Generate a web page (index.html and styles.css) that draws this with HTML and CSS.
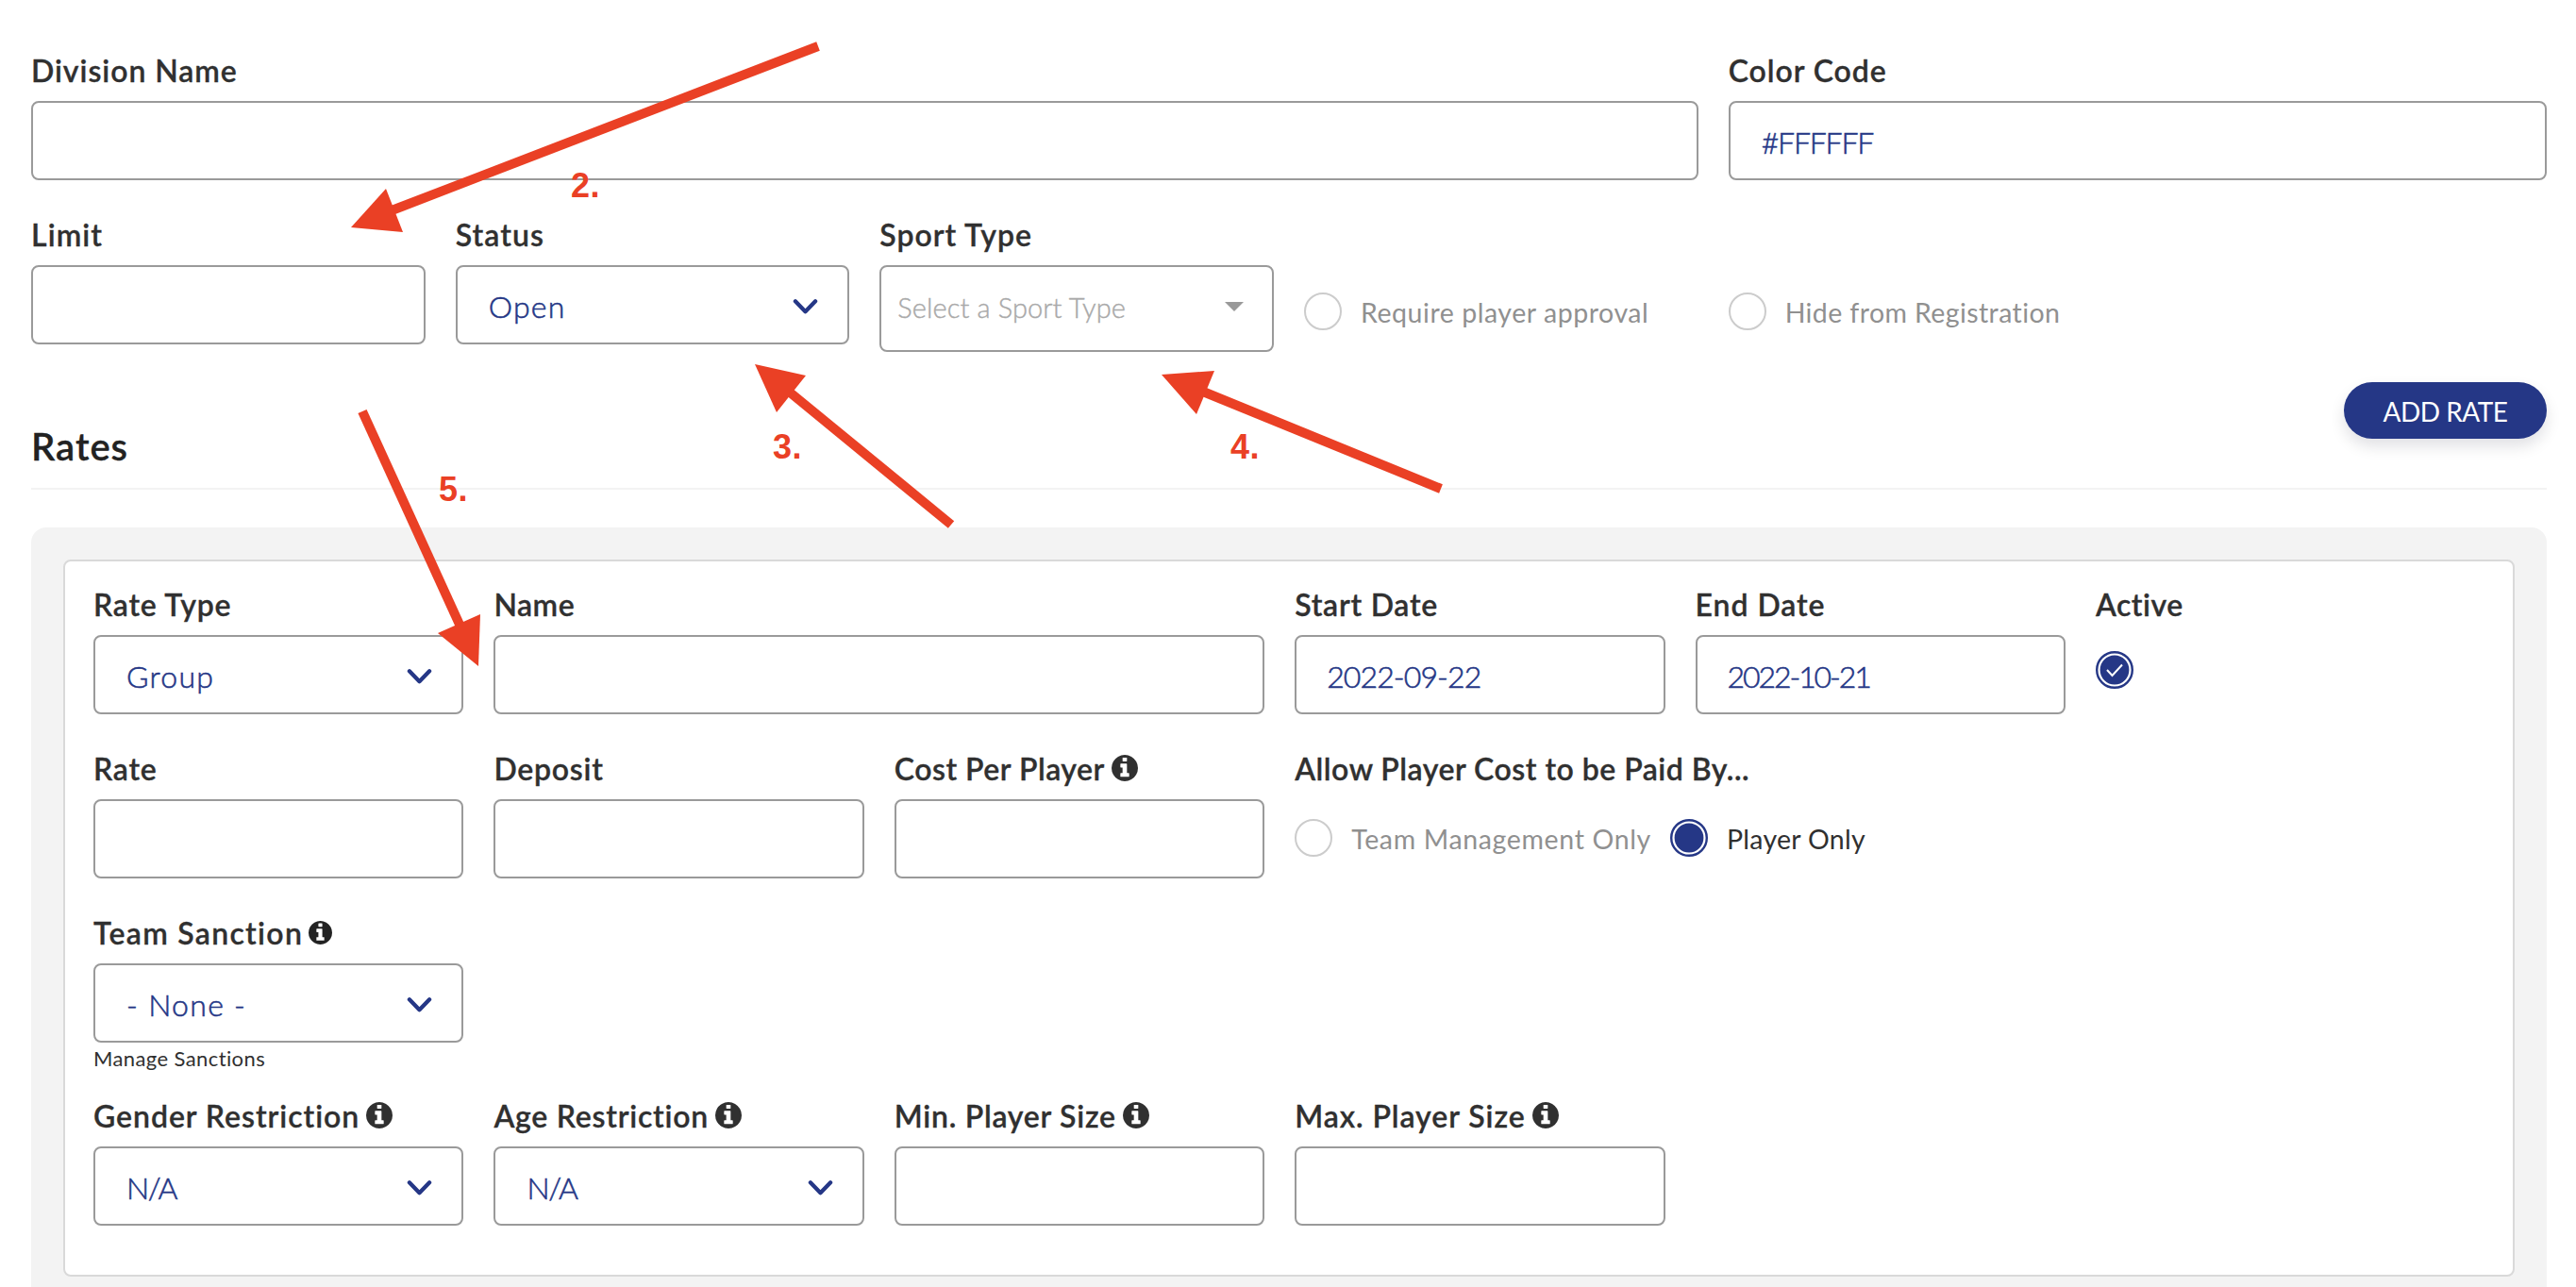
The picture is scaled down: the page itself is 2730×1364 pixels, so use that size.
FILE: index.html
```html
<!DOCTYPE html>
<html lang="en">
<head>
<meta charset="utf-8">
<title>Division</title>
<link rel="stylesheet" href="styles.css">
</head>
<body>
<svg class="sprite" aria-hidden="true">
  <symbol id="chevron" viewBox="0 0 28 18"><path d="M3 3 L14 14.5 L25 3" fill="none" stroke="#253786" stroke-width="4.4" stroke-linecap="round" stroke-linejoin="round"/></symbol>
  <symbol id="info" viewBox="0 128 1536 1536"><path fill="currentColor" d="M1024 1376v-160q0-14-9-23t-23-9h-96v-512q0-14-9-23t-23-9h-320q-14 0-23 9t-9 23v160q0 14 9 23t23 9h96v320h-96q-14 0-23 9t-9 23v160q0 14 9 23t23 9h448q14 0 23-9t9-23zm-128-896v-160q0-14-9-23t-23-9h-192q-14 0-23 9t-9 23v160q0 14 9 23t23 9h192q14 0 23-9t9-23zm640 416q0 209-103 385.5t-279.5 279.5-385.5 103-385.5-103-279.5-279.5-103-385.5 103-385.5 279.5-279.5 385.5-103 385.5 103 279.5 279.5 103 385.5z"/></symbol>
</svg>
<main class="form">
  <section class="grid top">
    <div class="field span4"><label class="label wide">Division Name</label><div class="input"></div></div>
    <div class="field span2"><label class="label wide">Color Code</label><div class="input"><span class="hex">#FFFFFF</span></div></div>
    <div class="field"><label class="label wider">Limit</label><div class="input"></div></div>
    <div class="field"><label class="label wider">Status</label><div class="input"><span class="value">Open</span><svg class="chev"><use href="#chevron"/></svg></div></div>
    <div class="field"><label class="label wide">Sport Type</label><div class="input combo"><span class="placeholder">Select a Sport Type</span><span class="caret"></span></div></div>
    <div class="option"><span class="circle"></span><span class="option-text">Require player approval</span></div>
    <div class="option"><span class="circle"></span><span class="option-text hide">Hide from Registration</span></div>
  </section>
  <header class="rates-head"><h2 class="title">Rates</h2><button class="add">ADD RATE</button></header>
  <section class="panel">
    <div class="card">
      <div class="grid rates">
        <div class="field"><label class="label mid">Rate Type</label><div class="input"><span class="value">Group</span><svg class="chev"><use href="#chevron"/></svg></div></div>
        <div class="field span2"><label class="label">Name</label><div class="input"></div></div>
        <div class="field"><label class="label mid">Start Date</label><div class="input"><span class="date">2022-09-22</span></div></div>
        <div class="field"><label class="label wide">End Date</label><div class="input"><span class="date end">2022-10-21</span></div></div>
        <div class="field"><label class="label">Active</label><svg class="check" viewBox="0 0 40 40"><circle cx="20" cy="20" r="18.8" fill="#fff" stroke="#253786" stroke-width="2.4"/><circle cx="20" cy="20" r="15.4" fill="#253786"/><path d="M12 20 L17.5 26 L28 14.5" fill="none" stroke="#fff" stroke-width="2"/></svg></div>
      </div>
      <div class="grid rates">
        <div class="field"><label class="label mid">Rate</label><div class="input"></div></div>
        <div class="field"><label class="label mid">Deposit</label><div class="input"></div></div>
        <div class="field"><label class="label">Cost Per Player<svg class="info"><use href="#info"/></svg></label><div class="input"></div></div>
        <div class="field span2"><label class="label">Allow Player Cost to be Paid By...</label>
          <div class="choices"><span class="circle"></span><span class="option-text team">Team Management Only</span><svg class="check radio" viewBox="0 0 40 40"><circle cx="20" cy="20" r="18.8" fill="#fff" stroke="#253786" stroke-width="2.4"/><circle cx="20" cy="20" r="15.4" fill="#253786"/></svg><span class="option-text chosen">Player Only</span></div></div>
      </div>
      <div class="grid rates sanction">
        <div class="field"><label class="label widest">Team Sanction<svg class="info small"><use href="#info"/></svg></label><div class="input"><span class="value">- None -</span><svg class="chev"><use href="#chevron"/></svg></div><a class="manage">Manage Sanctions</a></div>
      </div>
      <div class="grid rates">
        <div class="field"><label class="label wide">Gender Restriction<svg class="info"><use href="#info"/></svg></label><div class="input"><span class="value tight">N/A</span><svg class="chev"><use href="#chevron"/></svg></div></div>
        <div class="field"><label class="label mid">Age Restriction<svg class="info"><use href="#info"/></svg></label><div class="input"><span class="value tight">N/A</span><svg class="chev"><use href="#chevron"/></svg></div></div>
        <div class="field"><label class="label mid">Min. Player Size<svg class="info"><use href="#info"/></svg></label><div class="input"></div></div>
        <div class="field"><label class="label wide">Max. Player Size<svg class="info"><use href="#info"/></svg></label><div class="input"></div></div>
      </div>
    </div>
  </section>
</main>
<svg class="notes" viewBox="0 0 2730 1364">
  <g stroke="#ea4025" stroke-width="10">
    <path d="M867 49 L410 225"/><path d="M1008 556 L830 410"/><path d="M1527 518 L1270 413"/><path d="M384 436 L488 664"/>
  </g>
  <g fill="#ea4025">
    <path d="M372 241 L409 200 L427 246Z"/><path d="M800 386 L854 398 L823 437Z"/><path d="M1231 397 L1287 393 L1268 439Z"/><path d="M507 706 L464 671 L509 651Z"/>
  </g>
  <g class="num"><text x="605" y="209">2.</text><text x="819" y="486">3.</text><text x="1304" y="486">4.</text><text x="465" y="531">5.</text></g>
</svg>
</body>
</html>
```
FILE: styles.css
```css
* { box-sizing: border-box; }
body { margin: 0; width: 2730px; height: 1364px; overflow: hidden; background: #fff; color: #303030; font-family: Lato, "Liberation Sans", sans-serif; position: relative; }
.sprite { display: none; }
.form { padding: 51px 31px 0 33px; }
.grid { display: grid; gap: 0 32px; }
.top { grid-template-columns: repeat(6, minmax(0, 1fr)); }
.top > .field { height: 174px; }
.rates { grid-template-columns: repeat(6, 392.4px); height: 174px; }
.sanction { height: 194px; }
.span2 { grid-column: span 2; }
.span4 { grid-column: span 4; }
.field { display: flex; flex-direction: column; align-items: stretch; }
.label { display: flex; align-items: center; height: 48px; margin-bottom: 8px; padding-bottom: 2px; font-size: 32px; font-weight: 600; white-space: nowrap; letter-spacing: .5px; -webkit-text-stroke: .3px currentColor; }
.mid { letter-spacing: .75px; }
.wide { letter-spacing: .95px; }
.wider { letter-spacing: 1.1px; }
.widest { letter-spacing: 1.3px; }
.input { display: flex; align-items: center; justify-content: space-between; height: 84px; border: 2px solid #9a9a9a; border-radius: 8px; padding: 3px 31px 0 33px; color: #253786; font-size: 32px; background: #fff; }
.value, .hex, .date { font-weight: 300; font-size: 32px; letter-spacing: 1.3px; -webkit-text-stroke: .55px currentColor; }
.hex { letter-spacing: -1.2px; }
.date { letter-spacing: -.9px; margin-left: -1px; }
.end { letter-spacing: -2.1px; }
.tight { letter-spacing: -1.4px; }
.chev { width: 27px; height: 18px; }
.combo { height: 92px; padding: 0 30px 4px 17px; }
.placeholder { color: #a9a9a9; font-weight: 300; font-size: 29px; letter-spacing: .1px; -webkit-text-stroke: .4px currentColor; }
.caret { border: 10px solid transparent; border-top-color: #999; border-bottom: 0; }
.option { display: flex; align-items: center; height: 125px; padding-top: 85px; }
.circle { flex: none; width: 40px; height: 40px; border: 2px solid #ccc; border-radius: 50%; background: #fff; }
.option-text { margin-left: 20px; padding-top: 2px; font-size: 28.5px; color: #909090; white-space: nowrap; letter-spacing: .55px; }
.hide { letter-spacing: .4px; }
.rates-head { display: flex; justify-content: space-between; height: 120px; border-bottom: 2px solid #f3f3f3; }
.title { margin: 50px 0 0; font-size: 40px; line-height: 48px; letter-spacing: 1px; color: #222; font-weight: 600; -webkit-text-stroke: .3px currentColor; }
.add { width: 215px; height: 60px; margin-top: 6px; padding: 2px 0 0; border: 0; border-radius: 30px; background: #253786; color: #fff; font: 400 28px Lato, sans-serif; letter-spacing: -.5px; box-shadow: 0 8px 16px rgba(0,0,30,.12); }
.panel { margin-top: 40px; height: 820px; padding: 34px; background: #f3f3f3; border-radius: 16px 16px 0 0; }
.card { height: 760px; padding: 22px 30px; border: 2px solid #d9d9d9; border-radius: 8px; background: #fff; }
.check { width: 40px; height: 40px; margin-top: 17px; }
.info { width: 28px; height: 28px; margin-left: 7px; }
.small { width: 25px; height: 25px; margin-left: 6px; color: #222; }
.choices { display: flex; align-items: center; height: 82px; }
.radio { flex: none; margin: 0 0 0 20px; }
.team { letter-spacing: .65px; }
.chosen { color: #303030; letter-spacing: .3px; }
.manage { font-size: 22px; line-height: 28px; margin-top: 3px; letter-spacing: .4px; }
.notes { position: absolute; inset: 0; width: 2730px; height: 1364px; }
.num { font: 700 36px "Liberation Sans", Arial, sans-serif; fill: #ea4025; letter-spacing: .6px; }
```
